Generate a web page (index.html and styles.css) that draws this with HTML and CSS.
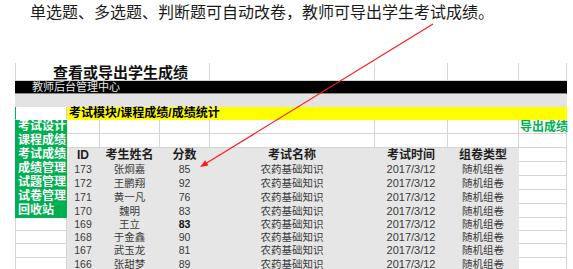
FILE: index.html
```html
<!DOCTYPE html>
<html lang="zh-CN">
  <head>
    <meta charset="UTF-8" />
    <title>查看或导出学生成绩</title>
    <link rel="stylesheet" href="styles.css">
  </head>
  <body>
    <p class="note">单选题、多选题、判断题可自动改卷，教师可导出学生考试成绩。</p>

    <table class="sheet">
      <colgroup>
        <col style="width: 52px" />
        <col style="width: 33px" />
        <col style="width: 60px" />
        <col style="width: 50px" />
        <col style="width: 165px" />
        <col style="width: 73px" />
        <col style="width: 71px" />
        <col style="width: 48px" />
      </colgroup>
      <tr class="row-title">
        <td colspan="4" class="title">查看或导出学生成绩</td>
        <td></td><td></td><td></td><td></td>
      </tr>
      <tr class="row-band">
        <td colspan="8" class="black">教师后台管理中心</td>
      </tr>
      <tr class="row-band row-grey">
        <td colspan="8" class="band">&nbsp;</td>
      </tr>
      <tr class="row-band">
        <td class="edge"></td>
        <td colspan="7" class="yellow">考试模块/课程成绩/成绩统计</td>
      </tr>
      <tr>
        <td class="menu">考试设计</td>
        <td></td><td></td><td></td><td></td><td></td><td></td>
        <td class="export">导出成绩</td>
      </tr>
      <tr>
        <td class="menu">课程成绩</td>
        <td></td><td></td><td></td><td></td><td></td><td></td><td></td>
      </tr>
      <tr>
        <td class="menu">考试成绩</td>
        <td class="g head">ID</td>
        <td class="g head">考生姓名</td>
        <td class="g head">分数</td>
        <td class="g head">考试名称</td>
        <td class="g head">考试时间</td>
        <td class="g head">组卷类型</td>
        <td></td>
      </tr>
      <tr>
        <td class="menu">成绩管理</td>
        <td class="g">173</td><td class="g">张炯嘉</td><td class="g">85</td>
        <td class="g">农药基础知识</td><td class="g date">2017/3/12</td><td class="g">随机组卷</td>
        <td></td>
      </tr>
      <tr>
        <td class="menu">试题管理</td>
        <td class="g">172</td><td class="g">王鹏翔</td><td class="g">92</td>
        <td class="g">农药基础知识</td><td class="g date">2017/3/12</td><td class="g">随机组卷</td>
        <td></td>
      </tr>
      <tr>
        <td class="menu">试卷管理</td>
        <td class="g">171</td><td class="g">黄一凡</td><td class="g">76</td>
        <td class="g">农药基础知识</td><td class="g date">2017/3/12</td><td class="g">随机组卷</td>
        <td></td>
      </tr>
      <tr>
        <td class="menu">回收站</td>
        <td class="g">170</td><td class="g">魏明</td><td class="g">83</td>
        <td class="g">农药基础知识</td><td class="g date">2017/3/12</td><td class="g">随机组卷</td>
        <td></td>
      </tr>
      <tr>
        <td class="blank"></td>
        <td class="g">169</td><td class="g">王立</td><td class="g strong">83</td>
        <td class="g">农药基础知识</td><td class="g date">2017/3/12</td><td class="g">随机组卷</td>
        <td></td>
      </tr>
      <tr>
        <td class="blank"></td>
        <td class="g">168</td><td class="g">于金鑫</td><td class="g">90</td>
        <td class="g">农药基础知识</td><td class="g date">2017/3/12</td><td class="g">随机组卷</td>
        <td></td>
      </tr>
      <tr>
        <td class="blank"></td>
        <td class="g">167</td><td class="g">武玉龙</td><td class="g">81</td>
        <td class="g">农药基础知识</td><td class="g date">2017/3/12</td><td class="g">随机组卷</td>
        <td></td>
      </tr>
      <tr>
        <td class="blank"></td>
        <td class="g">166</td><td class="g">张甜梦</td><td class="g">89</td>
        <td class="g">农药基础知识</td><td class="g date">2017/3/12</td><td class="g">随机组卷</td>
        <td></td>
      </tr>
      <tr class="row-tail">
        <td class="blank"></td>
        <td></td><td></td><td></td><td></td><td></td><td></td><td></td>
      </tr>
    </table>

    <!-- red callout arrow drawn over the sheet -->
    <svg class="arrow" width="573" height="269" viewBox="0 0 573 269">
      <line x1="433" y1="24" x2="205" y2="164" stroke="#ff1a1a" stroke-width="1.2" />
      <polygon points="200,167 208.4,165.4 205.2,160.2" fill="#ff1a1a" />
    </svg>
  </body>
</html>
```

FILE: styles.css
```css
body {
  margin: 0;
  position: relative;
  width: 573px;
  height: 269px;
  overflow: hidden;
  background: #fff;
  font-family: "Liberation Sans", "Noto Sans CJK SC", sans-serif;
  color: #333;
}
.note {
  margin: 0;
  padding-left: 30px;
  font-family: "Noto Sans CJK SC", sans-serif;
  font-size: 16px;
  line-height: 23px;
  color: #1a1a1a;
  white-space: nowrap;
}
.sheet {
  margin: 40px 0 0 15px;
  width: 552px;
  table-layout: fixed;
  border-collapse: separate;
  border-spacing: 0;
}
.sheet td {
  box-sizing: border-box;
  height: 13.2px;
  padding: 0;
  border-right: 1px solid #d4d4d4;
  border-bottom: 1px solid #d4d4d4;
  font-size: 10.5px;
  line-height: 12px;
  vertical-align: middle;
  white-space: nowrap;
}
.sheet .row-title td {
  height: 18px;
}
.sheet .row-band td {
  height: 13px;
}
.sheet .row-grey {
  background: #e3e3e3;
}
.sheet .row-tail td {
  height: 4px;
  border-bottom: none;
}
.sheet td.title {
  padding-left: 37px;
  border-left: 1px solid #d4d4d4;
  font-family: "Noto Sans CJK SC", sans-serif;
  font-size: 15px;
  font-weight: bold;
  color: #111;
  line-height: 17px;
}
.sheet td.black {
  padding-left: 17px;
  background: #000;
  border-right-color: #000;
  border-bottom-color: #8a8a8a;
  color: #e8e8e8;
  font-size: 11px;
}
.sheet td.band {
  background: #e3e3e3;
  border-right-color: #e3e3e3;
  border-bottom-color: #e3e3e3;
  font-size: 10px;
  line-height: 10px;
}
.sheet td.edge {
  border-left: 1px solid #00b050;
  border-bottom-color: #fff;
}
.sheet td.yellow {
  padding-left: 2px;
  background: #ffff00;
  border-right-color: #ffff00;
  border-bottom-color: #ffff00;
  font-size: 12px;
  font-weight: bold;
  color: #000;
}
.sheet td.menu {
  padding-left: 2px;
  background: #00b050;
  border-left: 1px solid #00b050;
  border-right-color: #00b050;
  border-bottom-color: #00b050;
  color: #fff;
  font-size: 12px;
  font-weight: bold;
  line-height: 13px;
}
.sheet td.blank {
  border-left: 1px solid #d4d4d4;
}
.sheet td.export {
  padding-left: 1px;
  color: #00b050;
  font-size: 12px;
  font-weight: bold;
}
.sheet td.g {
  background: #e6e6e6;
  border-right-color: #e6e6e6;
  border-bottom-color: #e6e6e6;
  text-align: center;
  color: #3a3a3a;
}
.sheet td.head {
  font-size: 12px;
  font-weight: bold;
  color: #1e1e1e;
}
.sheet td.date {
  font-size: 11px;
}
.sheet td.strong {
  font-weight: bold;
  color: #111;
}
.arrow {
  position: absolute;
  top: 0;
  left: 0;
  pointer-events: none;
}
```
